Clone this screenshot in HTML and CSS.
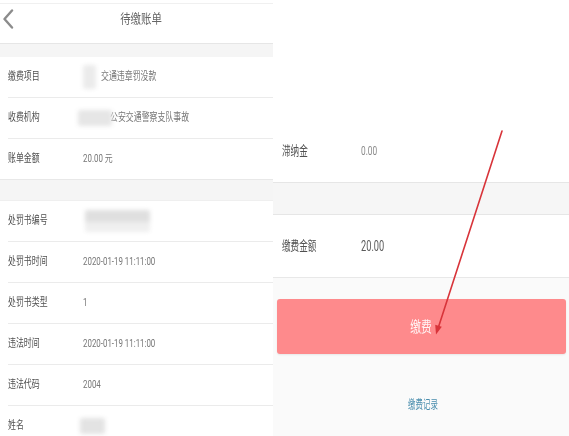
FILE: index.html
```html
<!DOCTYPE html>
<html lang="zh-CN">
<head>
<meta charset="utf-8">
<title>待缴账单</title>
<link rel="stylesheet" href="styles.css">
</head>
<body>
<div class="page">
  <section class="left">
    <header class="hdr">
      <svg class="back" width="14" height="20" viewBox="0 0 14 20"><polyline points="11,1.5 3.5,10 11,18.5" fill="none" stroke="#8c8c8c" stroke-width="2.4" stroke-linecap="round" stroke-linejoin="round"/></svg>
      <div class="hdr-title"><span class="t tc">待缴账单</span></div>
    </header>
    <div class="band-top"></div>
    <div class="row"><div class="lbl"><span class="t">缴费项目</span></div><div class="val"><span class="blur b1"></span><span class="t">交通违章罚没款</span></div></div>
    <div class="row"><div class="lbl"><span class="t">收费机构</span></div><div class="val"><span class="blur b2"></span><span class="t">公安交通警察支队事故</span></div></div>
    <div class="row last"><div class="lbl"><span class="t">账单金额</span></div><div class="val"><span class="t num">20.00 元</span></div></div>
    <div class="band-mid"></div>
    <div class="row"><div class="lbl"><span class="t">处罚书编号</span></div><div class="val"><span class="blur b3"></span></div></div>
    <div class="row"><div class="lbl"><span class="t">处罚书时间</span></div><div class="val"><span class="t num">2020-01-19 11:11:00</span></div></div>
    <div class="row"><div class="lbl"><span class="t">处罚书类型</span></div><div class="val"><span class="t num">1</span></div></div>
    <div class="row"><div class="lbl"><span class="t">违法时间</span></div><div class="val"><span class="t num">2020-01-19 11:11:00</span></div></div>
    <div class="row"><div class="lbl"><span class="t">违法代码</span></div><div class="val"><span class="t num">2004</span></div></div>
    <div class="row"><div class="lbl"><span class="t">姓名</span></div><div class="val"><span class="blur b4"></span></div></div>
  </section>
  <section class="right">
    <div class="rtop"></div>
    <div class="rrow"><div class="rlbl"><span class="t rt">滞纳金</span></div><div class="rval"><span class="t rv">0.00</span></div></div>
    <div class="rband"></div>
    <div class="rrow r2"><div class="rlbl"><span class="t rt">缴费金额</span></div><div class="rval"><span class="t rv big">20.00</span></div></div>
    <div class="rbottom">
      <button class="pay"><span class="t tc pt">缴费</span></button>
      <div class="link"><span class="t tc lt">缴费记录</span></div>
    </div>
  </section>
  <svg class="arrow" width="569" height="436" viewBox="0 0 569 436">
    <line x1="502" y1="131" x2="438.5" y2="327" stroke="#d8343a" stroke-width="1.6" stroke-linecap="round"/>
    <polygon points="436,334.5 441.8,326.8 435.2,324.8" fill="#d8343a"/>
  </svg>
</div>
</body>
</html>
```
FILE: styles.css
```css
* { box-sizing: content-box; }
html, body { margin: 0; padding: 0; background: #fff; }
.page {
  position: relative;
  display: flex;
  width: 569px;
  height: 436px;
  overflow: hidden;
  font-family: Roboto, "Noto Sans CJK SC", sans-serif;
  color: #555;
}
.t {
  display: inline-block;
  white-space: nowrap;
  transform: scaleX(0.72);
  transform-origin: left center;
}
.t.tc { transform-origin: center center; }

/* left panel */
.left { width: 273px; flex: none; }
.hdr {
  margin-top: 3px;
  border-top: 1px solid #f0f0f0;
  border-bottom: 1px solid #e6e6e6;
  height: 30px;
  padding-bottom: 9px;
  display: grid;
  grid-template-columns: 20px 1fr 20px;
  align-items: center;
}
.back { display: block; margin-left: 1px; }
.hdr-title {
  text-align: center;
  padding-left: 9px;
  font-size: 13px;
  color: #666;
  line-height: 16px;
}
.hdr-title .t { transform: scaleX(0.8); }
.band-top { height: 13px; background: #f5f5f5; }
.band-mid {
  height: 20px;
  background: #f5f5f5;
  border-top: 1px solid #e8e8e8;
  border-bottom: 1px solid #efefef;
}
.row {
  margin-left: 8px;
  height: 40px;
  border-bottom: 1px solid #ebebeb;
  display: flex;
  align-items: center;
  font-size: 11px;
  line-height: 14px;
}
.row.last { border-bottom: none; }
.lbl { width: 75px; flex: none; color: #505050; }
.val { flex: 1; display: flex; align-items: center; color: #777; }
.num { font-size: 10px; transform: scaleX(0.79); }
.blur {
  display: inline-block;
  flex: none;
  background: #e2e2e2;
  filter: blur(2px);
  border-radius: 2px;
}
.b1 { width: 13px; height: 24px; margin-right: 5px; background: #ebebeb; }
.b2 { width: 34px; height: 16px; margin-left: -5px; margin-right: -2px; position: relative; z-index: 1; background: #e6e6e6; }
.b3 { width: 65px; height: 22px; margin-left: 2px; background: linear-gradient(#dfdfdf 0 55%, #efefef 55% 100%); }
.b4 { width: 25px; height: 16px; margin-left: -3px; background: #e3e3e3; }

/* right panel */
.right {
  flex: 1;
  display: flex;
  flex-direction: column;
}
.rtop { height: 119px; flex: none; }
.rrow {
  height: 63px;
  flex: none;
  display: flex;
  align-items: center;
  padding-left: 9px;
}
.rrow.r2 { height: 62px; border-bottom: 1px solid #e8e8e8; }
.rlbl { width: 79px; flex: none; font-size: 13px; line-height: 16px; color: #505050; }
.rt { transform: scaleX(0.66); }
.rval { font-size: 13px; line-height: 16px; color: #8a8a8a; }
.rv { transform: scaleX(0.64); }
.rv.big { font-size: 14px; color: #5a5a5a; transform: scaleX(0.66); }
.rband {
  height: 31px;
  flex: none;
  background: #f6f6f6;
  border-top: 1px solid #e6e6e6;
  border-bottom: 1px solid #e6e6e6;
}
.rbottom {
  flex: 1;
  background: #fafafa;
  padding: 21px 3px 0 4px;
}
.pay {
  display: flex;
  align-items: center;
  justify-content: center;
  width: 100%;
  height: 55px;
  margin: 0;
  padding: 0;
  border: none;
  border-radius: 3px;
  background: #fe8a8c;
  box-shadow: 0 1px 2px rgba(0, 0, 0, 0.08);
  font-family: Roboto, "Noto Sans CJK SC", sans-serif;
  font-size: 15px;
  line-height: 18px;
  color: rgba(255, 255, 255, 0.92);
}
.pt { transform: scaleX(0.72); }
.link {
  margin-top: 44px;
  padding-left: 4px;
  text-align: center;
  font-size: 12px;
  line-height: 14px;
  color: #4a8eae;
}
.lt { transform: scaleX(0.62); }

.arrow {
  position: absolute;
  left: 0;
  top: 0;
  pointer-events: none;
}
```
